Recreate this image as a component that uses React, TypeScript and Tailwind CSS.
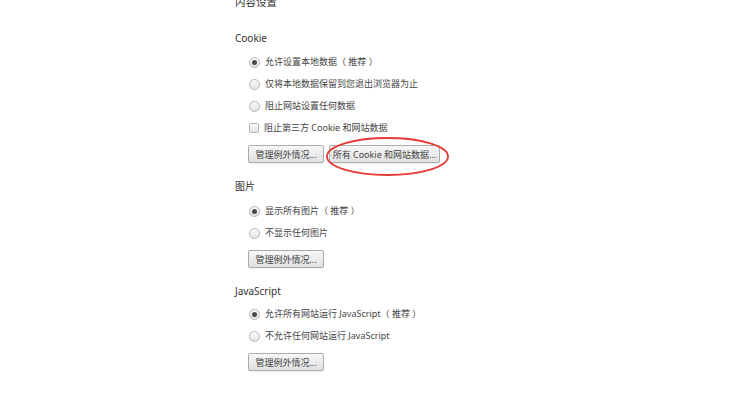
import React from "react";

const FONT = { fontFamily: '"Noto Sans", "Noto Sans CJK SC", sans-serif' };

function Radio({ checked }: { checked?: boolean }) {
  return (
    <span className="w-[11px] h-[11px] rounded-full border border-[#b4b4b4] bg-gradient-to-b from-[#fbfbfb] to-[#e4e4e4] flex items-center justify-center shrink-0">
      {checked && <span className="w-[5px] h-[5px] rounded-full bg-[#4a4a4a]" />}
    </span>
  );
}

function Check() {
  return (
    <span className="w-[10px] h-[10px] rounded-[2px] border border-[#b4b4b4] bg-gradient-to-b from-[#fbfbfb] to-[#e4e4e4] shrink-0" />
  );
}

function Row({ children, box }: { children: React.ReactNode; box: React.ReactNode }) {
  return (
    <div className="h-[22px] flex items-center pl-[14px] gap-[5px] text-[9px] text-[#444]">
      {box}
      <span className="whitespace-pre">{children}</span>
    </div>
  );
}

function Btn({ children, wide }: { children: React.ReactNode; wide?: boolean }) {
  return (
    <button
      className={
        wide
          ? "h-[18px] w-[111px] px-0 flex items-center justify-center whitespace-nowrap rounded-[2px] border border-[#ababab] bg-gradient-to-b from-[#f7f7f7] to-[#e0e0e0] text-[9px] text-[#444] shadow-[0_1px_0_rgba(0,0,0,0.06)] leading-none"
          : "h-[18px] w-[76px] px-0 flex items-center justify-center whitespace-nowrap rounded-[2px] border border-[#ababab] bg-gradient-to-b from-[#f7f7f7] to-[#e0e0e0] text-[9px] text-[#444] shadow-[0_1px_0_rgba(0,0,0,0.06)] leading-none"
      }
    >
      {children}
    </button>
  );
}

export default function App() {
  return (
    <div className="w-[750px] h-[400px] bg-white overflow-hidden relative" style={FONT}>
      <div className="pl-[235px]">
        <div className="h-[20px] -mt-[7px] flex items-center text-[10.5px] text-[#333]">内容设置</div>

        <div className="h-[20px] mt-[15px] flex items-center text-[10px] text-[#333]">Cookie</div>
        <div className="mt-[3px]">
          <Row box={<Radio checked />}>允许设置本地数据（ 推荐 ）</Row>
          <Row box={<Radio />}>仅将本地数据保留到您退出浏览器为止</Row>
          <Row box={<Radio />}>阻止网站设置任何数据</Row>
          <Row box={<Check />}>阻止第三方 Cookie 和网站数据</Row>
        </div>
        <div className="mt-[6px] pl-[13px] flex gap-[5px]">
          <Btn>管理例外情况...</Btn>
          <Btn wide>所有 Cookie 和网站数据...</Btn>
        </div>

        <div className="h-[20px] mt-[13px] flex items-center text-[10px] text-[#333]">图片</div>
        <div className="mt-[4px]">
          <Row box={<Radio checked />}>显示所有图片（ 推荐 ）</Row>
          <Row box={<Radio />}>不显示任何图片</Row>
        </div>
        <div className="mt-[6px] pl-[13px] flex">
          <Btn>管理例外情况...</Btn>
        </div>

        <div className="h-[20px] mt-[13px] flex items-center text-[10px] text-[#333]">JavaScript</div>
        <div className="mt-[2px]">
          <Row box={<Radio checked />}>允许所有网站运行 JavaScript（ 推荐 ）</Row>
          <Row box={<Radio />}>不允许任何网站运行 JavaScript</Row>
        </div>
        <div className="mt-[6px] pl-[13px] flex">
          <Btn>管理例外情况...</Btn>
        </div>
      </div>

      <svg className="absolute left-[325px] top-[136px]" width="125" height="41" viewBox="0 0 125 41">
        <ellipse cx="62.5" cy="20.5" rx="60.5" ry="18.5" fill="none" stroke="#e53a35" strokeWidth="1.8" />
      </svg>
    </div>
  );
}
